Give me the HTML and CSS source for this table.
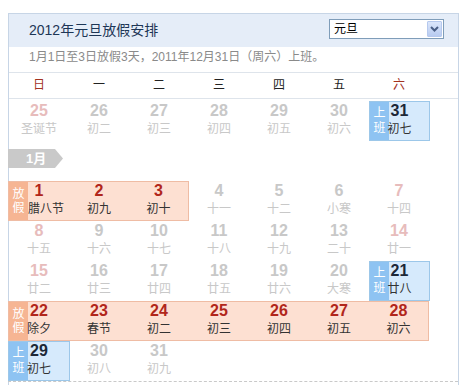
FILE: index.html
```html
<!DOCTYPE html>
<html lang="zh-CN">
<head>
<meta charset="utf-8">
<title>2012年元旦放假安排</title>
<link rel="stylesheet" href="styles.css">
</head>
<body>
<div class="cal">
  <div class="head">
    <div class="title">2012年元旦放假安排</div>
    <div class="select">
      <span class="sel-text">元旦</span>
      <span class="sel-btn"><svg width="9" height="6" viewBox="0 0 9 6"><path d="M1 1 L4.5 4.5 L8 1" fill="none" stroke="#4a5f86" stroke-width="2"/></svg></span>
    </div>
  </div>
  <div class="sub">1月1日至3日放假3天，2011年12月31日（周六）上班。</div>
  <div class="weekdays">
    <div class="wk-red">日</div><div>一</div><div>二</div><div>三</div><div>四</div><div>五</div><div class="wk-red">六</div>
  </div>
  <div class="weeks">
    <div class="week">
      <div class="day weekend"><div class="in"><div class="n">25</div><div class="l">圣诞节</div></div></div>
      <div class="day"><div class="in"><div class="n">26</div><div class="l">初二</div></div></div>
      <div class="day"><div class="in"><div class="n">27</div><div class="l">初三</div></div></div>
      <div class="day"><div class="in"><div class="n">28</div><div class="l">初四</div></div></div>
      <div class="day"><div class="in"><div class="n">29</div><div class="l">初五</div></div></div>
      <div class="day"><div class="in"><div class="n">30</div><div class="l">初六</div></div></div>
      <div class="day work"><div class="lab">上<br>班</div><div class="in"><div class="n">31</div><div class="l">初七</div></div></div>
    </div>
  </div>
  <div class="month"><div class="mtag">1月</div></div>
  <div class="weeks jan">
    <div class="week">
      <div class="day hol first edge"><div class="lab">放<br>假</div><div class="in"><div class="n">1</div><div class="l after-lab">腊八节</div></div></div>
      <div class="day hol"><div class="in"><div class="n">2</div><div class="l">初九</div></div></div>
      <div class="day hol last"><div class="in"><div class="n">3</div><div class="l">初十</div></div></div>
      <div class="day"><div class="in"><div class="n">4</div><div class="l">十一</div></div></div>
      <div class="day"><div class="in"><div class="n">5</div><div class="l">十二</div></div></div>
      <div class="day"><div class="in"><div class="n">6</div><div class="l">小寒</div></div></div>
      <div class="day weekend"><div class="in"><div class="n">7</div><div class="l">十四</div></div></div>
    </div>
    <div class="week">
      <div class="day weekend"><div class="in"><div class="n">8</div><div class="l">十五</div></div></div>
      <div class="day"><div class="in"><div class="n">9</div><div class="l">十六</div></div></div>
      <div class="day"><div class="in"><div class="n">10</div><div class="l">十七</div></div></div>
      <div class="day"><div class="in"><div class="n">11</div><div class="l">十八</div></div></div>
      <div class="day"><div class="in"><div class="n">12</div><div class="l">十九</div></div></div>
      <div class="day"><div class="in"><div class="n">13</div><div class="l">二十</div></div></div>
      <div class="day weekend"><div class="in"><div class="n">14</div><div class="l">廿一</div></div></div>
    </div>
    <div class="week">
      <div class="day weekend"><div class="in"><div class="n">15</div><div class="l">廿二</div></div></div>
      <div class="day"><div class="in"><div class="n">16</div><div class="l">廿三</div></div></div>
      <div class="day"><div class="in"><div class="n">17</div><div class="l">廿四</div></div></div>
      <div class="day"><div class="in"><div class="n">18</div><div class="l">廿五</div></div></div>
      <div class="day"><div class="in"><div class="n">19</div><div class="l">廿六</div></div></div>
      <div class="day"><div class="in"><div class="n">20</div><div class="l">大寒</div></div></div>
      <div class="day work"><div class="lab">上<br>班</div><div class="in"><div class="n">21</div><div class="l">廿八</div></div></div>
    </div>
    <div class="week">
      <div class="day hol first edge"><div class="lab">放<br>假</div><div class="in"><div class="n">22</div><div class="l">除夕</div></div></div>
      <div class="day hol"><div class="in"><div class="n">23</div><div class="l">春节</div></div></div>
      <div class="day hol"><div class="in"><div class="n">24</div><div class="l">初二</div></div></div>
      <div class="day hol"><div class="in"><div class="n">25</div><div class="l">初三</div></div></div>
      <div class="day hol"><div class="in"><div class="n">26</div><div class="l">初四</div></div></div>
      <div class="day hol"><div class="in"><div class="n">27</div><div class="l">初五</div></div></div>
      <div class="day hol last"><div class="in"><div class="n">28</div><div class="l">初六</div></div></div>
    </div>
    <div class="week">
      <div class="day work edge"><div class="lab">上<br>班</div><div class="in"><div class="n">29</div><div class="l">初七</div></div></div>
      <div class="day"><div class="in"><div class="n">30</div><div class="l">初八</div></div></div>
      <div class="day"><div class="in"><div class="n">31</div><div class="l">初九</div></div></div>
    </div>
  </div>
</div>
</body>
</html>
```

FILE: styles.css
```css
* {
  box-sizing: border-box;
  margin: 0;
  padding: 0;
}

body {
  margin: 0;
  background: #fff;
  font-family: "Liberation Sans", "Noto Sans CJK SC", sans-serif;
  color: #222;
}

.cal {
  margin: 13px 0 0 8px;
  width: 451px;
  border: 1px solid #c7d5e6;
  border-bottom: none;
  padding-bottom: 10px;
}

.head {
  height: 33px;
  background: #e5edf8;
  display: flex;
  justify-content: space-between;
  align-items: flex-start;
  padding: 0 14px 0 20px;
}

.title {
  font-size: 14px;
  line-height: 33px;
  color: #1d3656;
}

.select {
  margin-top: 5px;
  width: 115px;
  height: 20px;
  border: 1px solid #7f9db9;
  background: #fff;
  display: flex;
  justify-content: space-between;
  align-items: center;
  padding: 0 1px 0 4px;
}

.sel-text {
  font-size: 12px;
  line-height: 16px;
  color: #000;
}

.sel-btn {
  width: 15px;
  height: 16px;
  border: 1px solid #b6c9ee;
  border-radius: 1px;
  background: linear-gradient(#dbe6fb, #b8cbf0);
  display: flex;
  align-items: center;
  justify-content: center;
}

.sub {
  height: 26px;
  border-bottom: 1px solid #dee4eb;
  padding-left: 20px;
  font-size: 12px;
  line-height: 21px;
  color: #8a8a8a;
}

.weekdays {
  display: grid;
  grid-template-columns: repeat(7, 60px);
  height: 26px;
  border-bottom: 1px solid #dee4eb;
  font-size: 12px;
  line-height: 25px;
  text-align: center;
  color: #222;
}

.wk-red {
  color: #a3321f;
}

.weeks {
  padding-top: 2px;
}

.weeks.jan {
  padding-top: 0;
  border-bottom: 1px dashed #c9c9c9;
  margin-left: -1px;
  padding-left: 1px;
}

.week {
  display: grid;
  grid-template-columns: repeat(7, 60px);
  height: 40px;
}

.day {
  display: grid;
  padding-top: 1px;
  color: #c8c8c8;
}

.day > * {
  grid-area: 1 / 1;
}

.in {
  text-align: center;
}

.n {
  font-weight: bold;
  font-size: 16px;
  line-height: 18px;
}

.l {
  font-size: 12px;
  line-height: 18px;
}

.l.after-lab {
  text-align: left;
  padding-left: 19px;
  white-space: nowrap;
}

.weekend .n {
  color: #e7bcbc;
}

.lab {
  justify-self: start;
  width: 19px;
  color: #fff;
  font-size: 12px;
  line-height: 14px;
  display: flex;
  flex-direction: column;
  justify-content: center;
  text-align: center;
}

.hol {
  padding-top: 0;
  background: #fde0d2;
  border-top: 1px solid #efbca4;
  border-bottom: 1px solid #efbca4;
}

.hol.first {
  border-left: 1px solid #efbca4;
}

.hol.last {
  border-right: 1px solid #efbca4;
}

.hol .n {
  color: #b1261b;
}

.hol .l {
  color: #333;
}

.hol .lab {
  background: #f6b593;
}

.work {
  padding-top: 0;
  background: #d6eafc;
  border: 1px solid #9cc7e9;
  margin-right: -1px;
}

.edge {
  margin-left: -1px;
}

.work .lab {
  background: #8ec3f2;
  line-height: 15px;
}

.work .n {
  color: #1c2838;
}

.work .l {
  color: #333;
}

.month {
  height: 40px;
  padding-top: 8px;
  margin-left: -1px;
}

.mtag {
  width: 55px;
  height: 19px;
  background: #c9c9c9;
  clip-path: polygon(0 0, 47px 0, 100% 50%, 47px 100%, 0 100%);
  color: #fff;
  font-weight: bold;
  font-size: 13px;
  line-height: 19px;
  padding-left: 18px;
}
```
